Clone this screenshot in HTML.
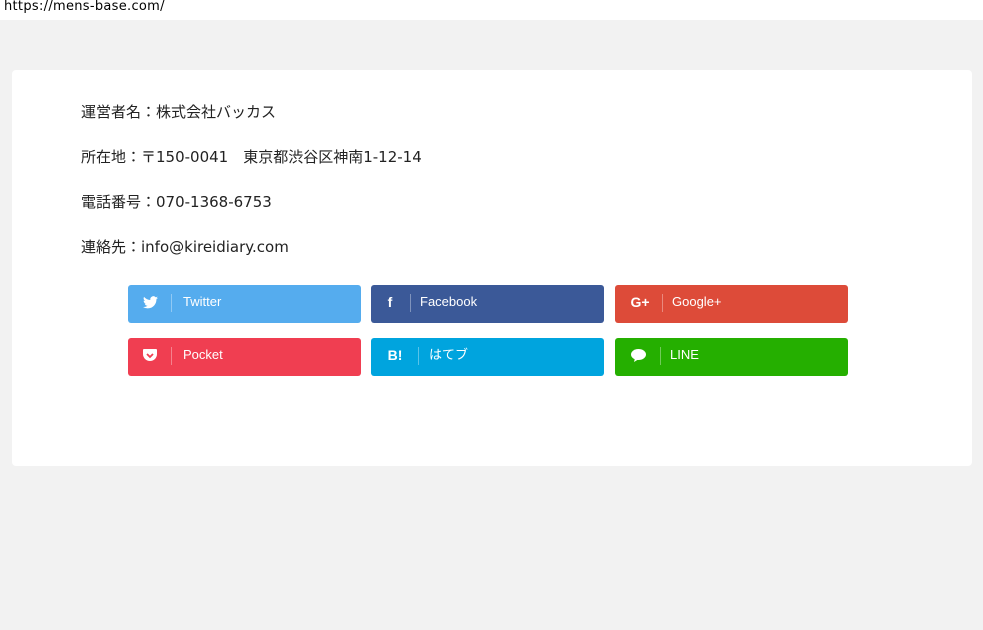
<!DOCTYPE html>
<html><head><meta charset="utf-8"><style>
body{margin:0;width:983px;height:630px;background:#f2f2f2;font-family:"Liberation Sans","Noto Sans CJK JP",sans-serif;position:relative;overflow:hidden}
.top{position:absolute;left:0;top:0;width:983px;height:20px;background:#fff;font-size:13px;padding-left:4px;box-sizing:border-box;color:#000;font-family:"DejaVu Sans","Noto Sans CJK JP",sans-serif;line-height:14px;letter-spacing:0.3px}
.card{position:absolute;left:12px;top:70px;width:960px;height:396px;background:#fff;border-radius:4px}
.t{position:absolute;left:81px;font-size:15px;color:#222;line-height:20px;font-family:"DejaVu Sans","Noto Sans CJK JP",sans-serif}
.b{position:absolute;width:233px;height:38px;border-radius:3px;color:#fff;font-size:13px}
.b .i{position:absolute;left:14px;top:0;width:16px;height:38px;display:flex;align-items:center;justify-content:center;font-weight:bold;font-size:14px}
.b .s{position:absolute;left:43px;top:9px;width:1px;height:18px;background:rgba(255,255,255,.35)}
.b .l{position:absolute;left:55px;top:0;line-height:33px}
</style></head><body>
<div class="top">https://mens-base.com/</div>
<div class="card"></div>
<div class="t" style="top:102px">運営者名：株式会社バッカス</div>
<div class="t" style="top:147px">所在地：〒150-0041　東京都渋谷区神南1-12-14</div>
<div class="t" style="top:192px">電話番号：070-1368-6753</div>
<div class="t" style="top:237px">連絡先：info@kireidiary.com</div>

<div class="b" style="left:128px;top:285px;background:#55acee"><div class="i" style="top:-2px"><svg width="15" height="13" viewBox="0 0 24 20"><path fill="#fff" d="M24 2.4a10 10 0 0 1-2.8.8A5 5 0 0 0 23.3.4a10 10 0 0 1-3.1 1.2A4.9 4.9 0 0 0 11.8 6 14 14 0 0 1 1.7.9a4.9 4.9 0 0 0 1.5 6.6A5 5 0 0 1 1 6.9a4.9 4.9 0 0 0 3.9 4.8 5 5 0 0 1-2.2.1 4.9 4.9 0 0 0 4.6 3.4A9.9 9.9 0 0 1 0 17.2 14 14 0 0 0 7.5 19.4c9.1 0 14-7.5 14-14v-.6A10 10 0 0 0 24 2.4z"/></svg></div><div class="s"></div><div class="l">Twitter</div></div>
<div class="b" style="left:371px;top:285px;background:#3b5998"><div class="i" style="top:-2px;left:11px">f</div><div class="s" style="left:39px"></div><div class="l" style="left:49px">Facebook</div></div>
<div class="b" style="left:615px;top:285px;background:#dd4b39"><div class="i" style="top:-2px;left:14px;width:22px;font-size:14px">G+</div><div class="s" style="left:47px"></div><div class="l" style="left:57px">Google+</div></div>
<div class="b" style="left:128px;top:338px;background:#f03e51"><div class="i" style="top:-2px"><svg width="14" height="13" viewBox="0 0 14 13"><path fill="#fff" d="M1 0h12a1 1 0 0 1 1 1v4a7 7 0 0 1-14 0V1a1 1 0 0 1 1-1z"/><path d="M4 5l3 3 3-3" stroke="#f03e51" stroke-width="1.8" fill="none"/></svg></div><div class="s"></div><div class="l">Pocket</div></div>
<div class="b" style="left:371px;top:338px;background:#00a4de"><div class="i" style="top:-2px;left:15px;width:18px">B!</div><div class="s" style="left:47px"></div><div class="l" style="left:58px">はてブ</div></div>
<div class="b" style="left:615px;top:338px;background:#25af00"><div class="i" style="top:-2px;left:15px"><svg width="15" height="13" viewBox="0 0 15 13"><ellipse cx="7.5" cy="5.5" rx="7.5" ry="5.5" fill="#fff"/><path d="M4 9l-1 4 5-3z" fill="#fff"/></svg></div><div class="s" style="left:45px"></div><div class="l">LINE</div></div>
</body></html>
